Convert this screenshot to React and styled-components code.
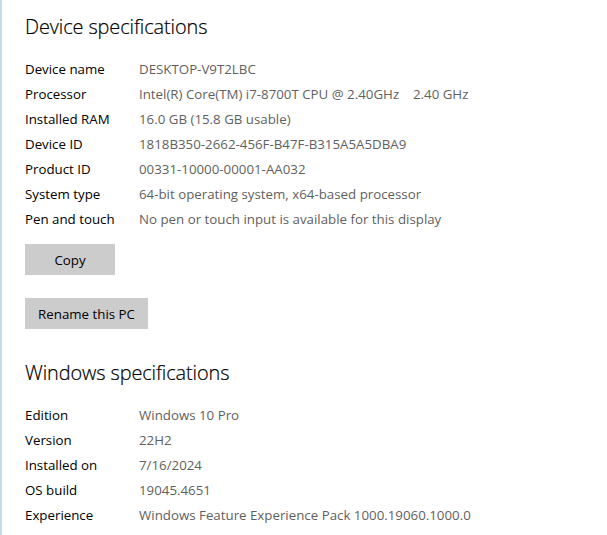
import React from 'react';
import styled, { createGlobalStyle } from 'styled-components';

const GlobalStyle = createGlobalStyle`
  html, body {
    margin: 0;
    padding: 0;
    background: #ffffff;
  }
  body {
    font-family: 'Open Sans', 'Noto Sans', sans-serif;
  }
`;

const deviceSpecs = [
  ['Device name', 'DESKTOP-V9T2LBC'],
  ['Processor', 'Intel(R) Core(TM) i7-8700T CPU @ 2.40GHz    2.40 GHz'],
  ['Installed RAM', '16.0 GB (15.8 GB usable)'],
  ['Device ID', '1818B350-2662-456F-B47F-B315A5A5DBA9'],
  ['Product ID', '00331-10000-00001-AA032'],
  ['System type', '64-bit operating system, x64-based processor'],
  ['Pen and touch', 'No pen or touch input is available for this display'],
];

const windowsSpecs = [
  ['Edition', 'Windows 10 Pro'],
  ['Version', '22H2'],
  ['Installed on', '7/16/2024'],
  ['OS build', '19045.4651'],
  ['Experience', 'Windows Feature Experience Pack 1000.19060.1000.0'],
];

const SpecList = ({ items }) => (
  <List>
    {items.map(([label, value]) => (
      <Row key={label}>
        <Label>{label}</Label>
        <Value>{value}</Value>
      </Row>
    ))}
  </List>
);

const App = () => {
  return (
    <>
      <GlobalStyle />
      <Page>
        <Heading>Device specifications</Heading>
        <SpecList items={deviceSpecs} />
        <ButtonStack>
          <Button width={90}>Copy</Button>
          <Button width={123}>Rename this PC</Button>
        </ButtonStack>
        <Heading spaced>Windows specifications</Heading>
        <SpecList items={windowsSpecs} />
      </Page>
    </>
  );
};

const Page = styled.div`
  min-height: 535px;
  box-sizing: border-box;
  border-left: 2px solid #c6dcec;
  padding: 13px 0 0 23px;
  display: flex;
  flex-direction: column;
  align-items: flex-start;
`;

const Heading = styled.h2`
  margin: ${props => (props.spaced ? '30px' : '0')} 0 0;
  font-size: 19.9px;
  line-height: 28px;
  font-weight: 300;
  color: #000000;
  letter-spacing: -0.1px;
  -webkit-text-stroke: 0.2px #000000;
`;

const List = styled.div`
  margin-top: 16px;
  display: grid;
  grid-template-columns: 114px auto;
  grid-auto-rows: 25px;
`;

const Row = styled.div`
  display: contents;
`;

const Label = styled.div`
  font-size: 13.3px;
  line-height: 25px;
  color: #000000;
  white-space: nowrap;
`;

const Value = styled(Label)`
  color: #5f5f5f;
  white-space: pre;
`;

const ButtonStack = styled.div`
  margin-top: 12px;
  display: flex;
  flex-direction: column;
  gap: 23px;
`;

const Button = styled.button`
  width: ${props => props.width}px;
  height: 31px;
  padding: 0;
  border: none;
  background: #cccccc;
  color: #000000;
  font-family: inherit;
  font-size: 13.3px;
`;

export default App;
